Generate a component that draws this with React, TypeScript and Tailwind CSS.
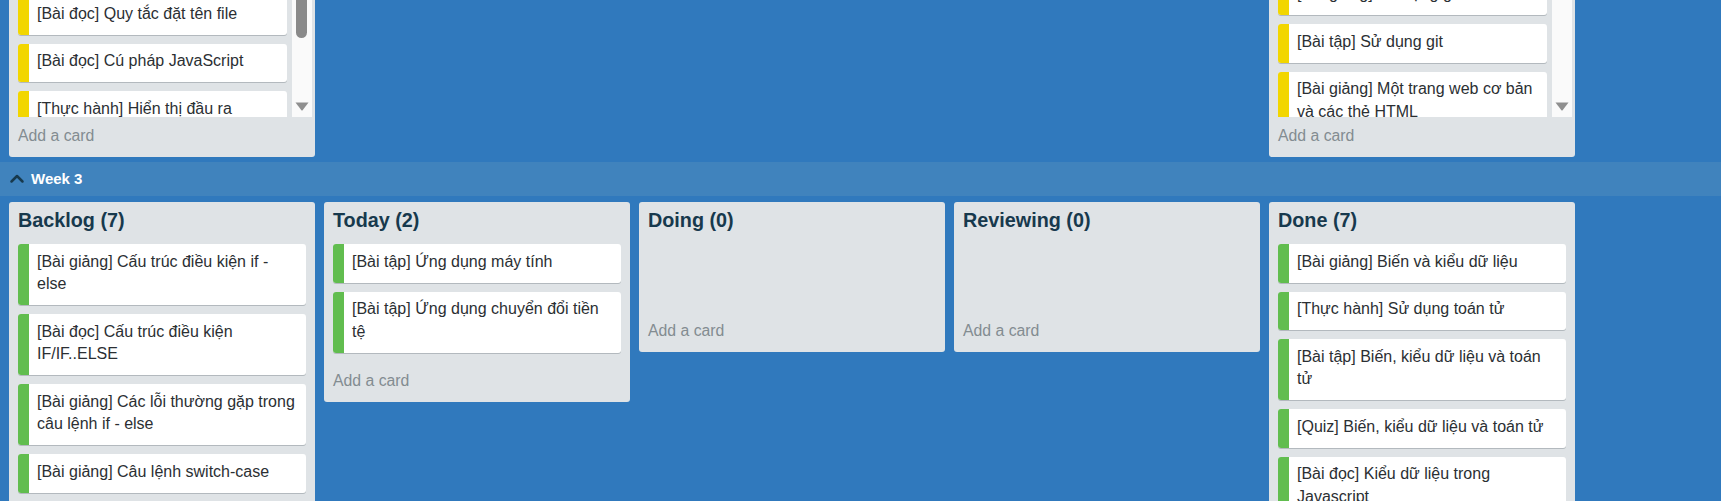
import React from "react";

type CardData = { text: string; color: string };

const GREEN = "bg-[#61bd4f]";
const YELLOW = "bg-[#f2d600]";

function Card({ text, color, first }: CardData & { first?: string }) {
  return (
    <div
      className={`flex overflow-hidden rounded-[3px] bg-white shadow-[0_1px_0_#b3b9be] mb-[9px] ${first ?? ""}`}
    >
      <div className={`w-[11px] shrink-0 ${color}`} />
      <div className="min-w-0 flex-1 pl-[8px] pr-[11px] pt-[6.5px] pb-[9.5px] text-[16px] leading-[22.5px] text-[#2b2f33]">
        {text}
      </div>
    </div>
  );
}

function AddCard({ extra }: { extra: string }) {
  return (
    <div className={`text-[15.8px] leading-[22.5px] text-[#838c91] ${extra}`}>
      Add a card
    </div>
  );
}

function ArrowDown() {
  return (
    <svg width="14" height="9" viewBox="0 0 14 9" className="block">
      <path d="M0.5 0.5 L13.5 0.5 L7.6 8.2 Q7 8.8 6.4 8.2 Z" fill="#8f8f8f" />
    </svg>
  );
}

function TopPanel({
  cards,
  offset,
  thumb,
}: {
  cards: CardData[];
  offset: string;
  thumb?: boolean;
}) {
  return (
    <div className="w-[306px] shrink-0 rounded-b-[3px] bg-[#dfe3e6]">
      <div className="flex h-[116.5px] pl-[9px] pr-[3px]">
        <div className="mr-[5px] min-w-0 flex-1 overflow-hidden">
          {cards.map((c, i) => (
            <Card key={i} {...c} first={i === 0 ? offset : undefined} />
          ))}
        </div>
        <div className="relative w-[20px] shrink-0 bg-[#fafafa]">
          {thumb && (
            <div className="absolute left-[3.5px] top-0 h-[38px] w-[11px] rounded-b-[6px] bg-[#8a8a8a]" />
          )}
          <div className="absolute bottom-[6px] left-[3px]">
            <ArrowDown />
          </div>
        </div>
      </div>
      <AddCard extra="px-[9px] pt-[8px] pb-[10px]" />
    </div>
  );
}

function Panel({ title, cards }: { title: string; cards: CardData[] }) {
  return (
    <div className="w-[306px] shrink-0 rounded-[3px] bg-[#dfe3e6] px-[9px] pt-[6px]">
      <h2 className="mb-[12px] text-[19.8px] font-bold leading-[24px] text-[#17394d]">
        {title}
      </h2>
      <div className="min-h-[68px]">
        {cards.map((c, i) => (
          <Card key={i} {...c} />
        ))}
      </div>
      <AddCard extra="pt-[8px] pb-[9.5px]" />
    </div>
  );
}

const topLeft: CardData[] = [
  { text: "[Bài đọc] Quy tắc đặt tên file", color: YELLOW },
  { text: "[Bài đọc] Cú pháp JavaScript", color: YELLOW },
  { text: "[Thực hành] Hiển thị đầu ra", color: YELLOW },
];

const topRight: CardData[] = [
  { text: "[Bài giảng] Sử dụng git", color: YELLOW },
  { text: "[Bài tập] Sử dụng git", color: YELLOW },
  { text: "[Bài giảng] Một trang web cơ bản và các thẻ HTML", color: YELLOW },
];

const backlog: CardData[] = [
  { text: "[Bài giảng] Cấu trúc điều kiện if - else", color: GREEN },
  { text: "[Bài đọc] Cấu trúc điều kiện IF/IF..ELSE", color: GREEN },
  { text: "[Bài giảng] Các lỗi thường gặp trong câu lệnh if - else", color: GREEN },
  { text: "[Bài giảng] Câu lệnh switch-case", color: GREEN },
];

const today: CardData[] = [
  { text: "[Bài tập] Ứng dụng máy tính", color: GREEN },
  { text: "[Bài tập] Ứng dụng chuyển đổi tiền tệ", color: GREEN },
];

const done: CardData[] = [
  { text: "[Bài giảng] Biến và kiểu dữ liệu", color: GREEN },
  { text: "[Thực hành] Sử dụng toán tử", color: GREEN },
  { text: "[Bài tập] Biến, kiểu dữ liệu và toán tử", color: GREEN },
  { text: "[Quiz] Biến, kiểu dữ liệu và toán tử", color: GREEN },
  { text: "[Bài đọc] Kiểu dữ liệu trong Javascript", color: GREEN },
];

export default function App() {
  return (
    <div className="h-[501px] w-[1721px] overflow-hidden bg-[#3079bd] font-['Liberation_Sans',Arial,sans-serif]">
      {/* previous week (scrolled) */}
      <div className="flex h-[157px] items-end gap-[9px] overflow-hidden pl-[9px]">
        <TopPanel cards={topLeft} offset="mt-[-4px]" thumb />
        <div className="w-[306px] shrink-0" />
        <div className="w-[306px] shrink-0" />
        <div className="w-[306px] shrink-0" />
        <TopPanel cards={topRight} offset="mt-[-23.5px]" />
      </div>

      {/* week header */}
      <div className="mt-[5px] flex h-[34px] items-center bg-[#4083bd] pl-[9px]">
        <svg width="16" height="16" viewBox="0 0 16 16" className="block">
          <polyline
            points="2.5,10.5 8,5 13.5,10.5"
            fill="none"
            stroke="#17394d"
            strokeWidth="2.5"
            strokeLinecap="round"
            strokeLinejoin="round"
          />
        </svg>
        <span className="ml-[6px] -mt-[1px] text-[15px] font-bold leading-none text-white">
          Week 3
        </span>
      </div>

      {/* lists */}
      <div className="mt-[6px] flex items-start gap-[9px] pl-[9px]">
        <Panel title="Backlog (7)" cards={backlog} />
        <Panel title="Today (2)" cards={today} />
        <Panel title="Doing (0)" cards={[]} />
        <Panel title="Reviewing (0)" cards={[]} />
        <Panel title="Done (7)" cards={done} />
      </div>
    </div>
  );
}
